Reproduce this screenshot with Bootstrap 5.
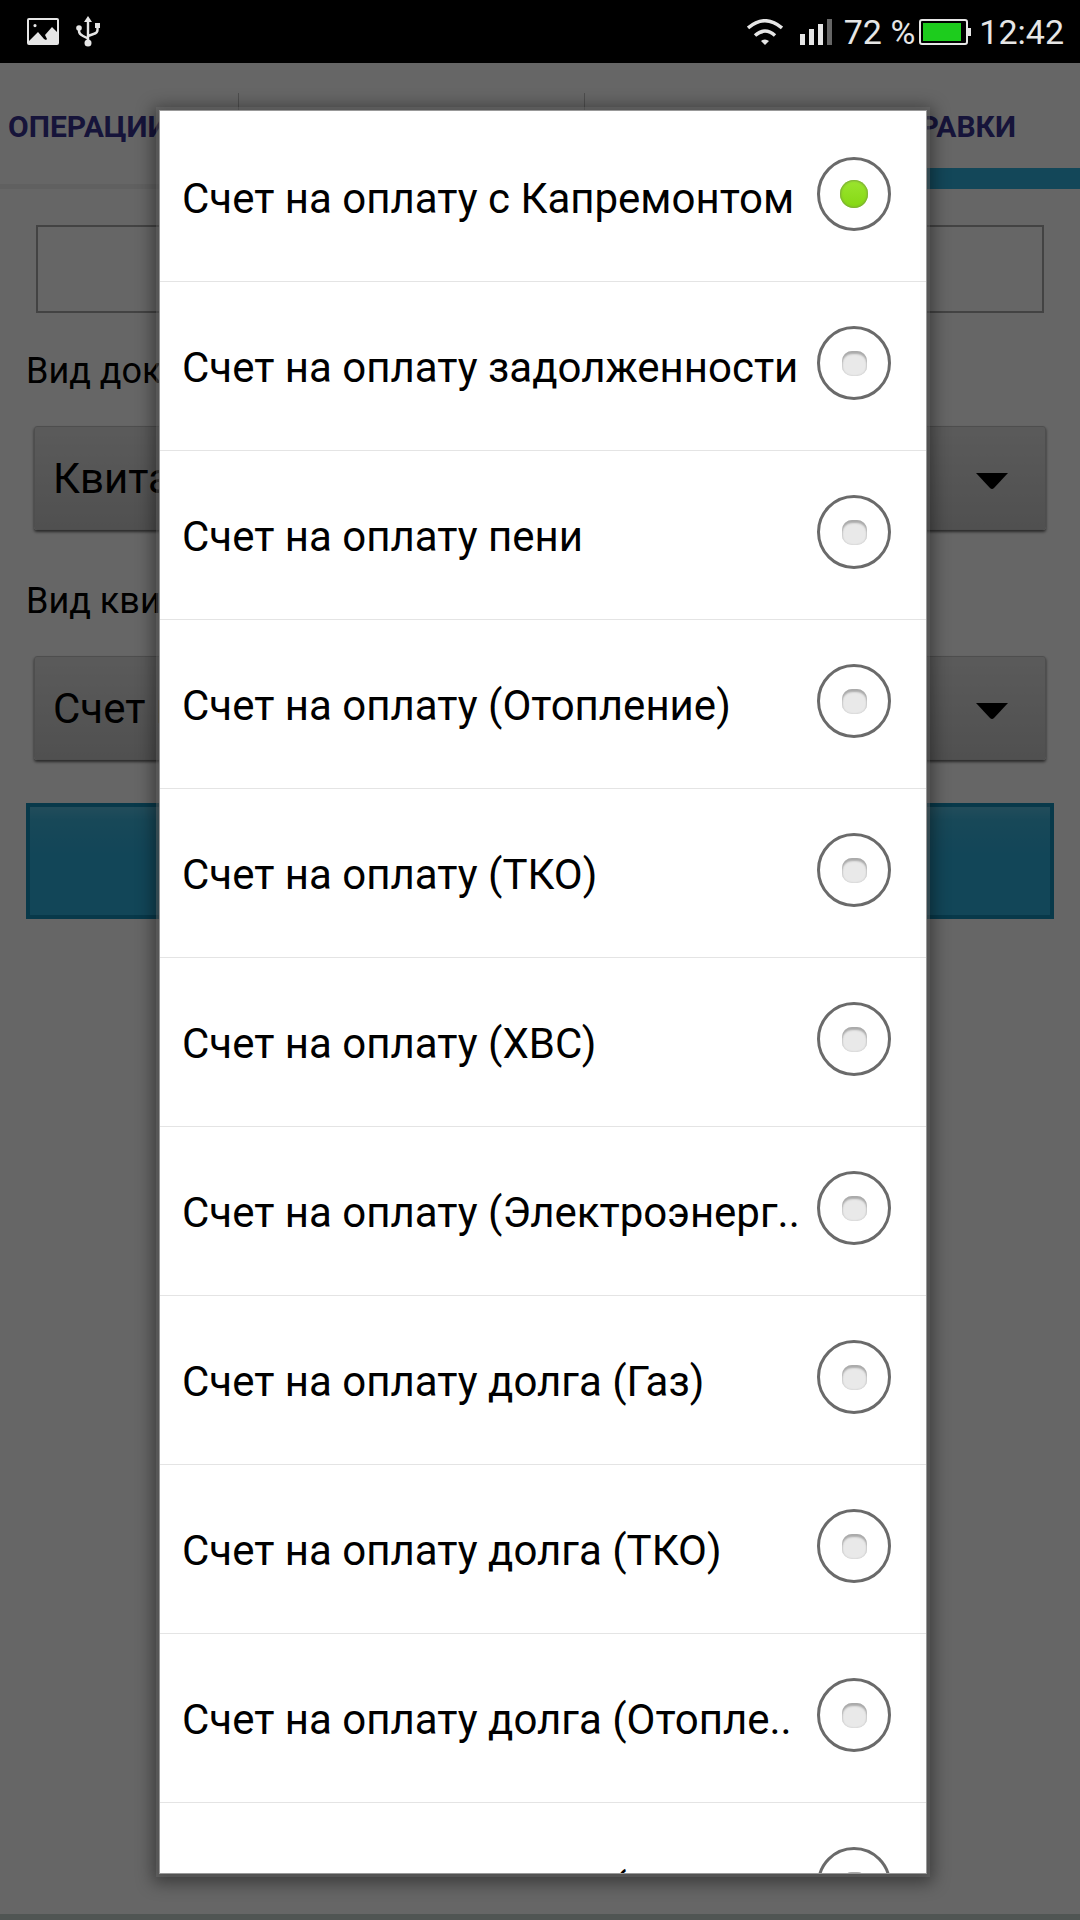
<!DOCTYPE html>
<html lang="ru">
<head>
<meta charset="utf-8">
<meta name="viewport" content="width=device-width, initial-scale=1">
<title>Вид квитанции</title>
<link href="https://cdn.jsdelivr.net/npm/bootstrap@5.3.0/dist/css/bootstrap.min.css" rel="stylesheet">
<style>
  body { font-family: Roboto, "Noto Sans", sans-serif; color: #000; background: #fff; }
  .status-bar { height: 63px; padding: 0 16px 0 27px; background: #000; color: #e6e6e6; font-size: 34px; line-height: 40px; }
  .status-bar svg { display: block; flex: none; }
  .screen { border-bottom: 6px solid #505553; }

  .tab-strip { height: 126px; }
  .tab-item { border: 0; border-bottom: 5px solid #f0f0f0; background: none; color: #373291; font-size: 30px; font-weight: 700; line-height: 36px; white-space: nowrap; padding: 41px 8px 35px; }
  .tab-first { width: 22%; text-align: left; }
  .tab-middle { width: 32%; }
  .tab-current { border-bottom: 21px solid #30b2df; padding-bottom: 19px; padding-right: 64px; text-align: right; }
  .tab-rule { width: 1px; margin: 30px 0; background: #c4c4c4; }

  .form-area { padding: 36px 26px; }
  .account-box { width: auto; height: 88px; margin: 0 10px 37px; border: 2px solid #a8a8a8; border-radius: 0; background: #fff; font-size: 36px; }
  .field-name { font-size: 36px; line-height: 42px; margin-bottom: 34px; }
  .picker select { display: block; height: 104px; padding: 0 90px 0 18px; appearance: none; border: 1px solid #c4c4c4; border-radius: 3px; color: #000; font-size: 42px; background: linear-gradient(#e2e2e2, #c8c8c8); box-shadow: 0 2px 3px rgba(0,0,0,.6); }
  .picker svg { top: 46px; right: 46px; pointer-events: none; }
  .picker-gap { margin-bottom: 50px; }
  .send-button { height: 116px; margin-top: 43px; border: 4px solid #1690b8; border-radius: 0; background: linear-gradient(#56bfe2, #3cb4dd 12%, #2eaedb 45%, #2eaedb); }

  .dim-layer { background: rgba(0,0,0,.6); padding: 47px 153px 40px 159px; }
  .choice-dialog { background: #fff; border: 1px solid #999; padding-top: 2px; box-shadow: 0 0 0 3px rgba(110,110,110,.4), 0 3px 16px 6px rgba(0,0,0,.42); }
  .choice-row { height: 169px; flex: none; padding: 0 35px 6px 22px; border-bottom: 1px solid #e4e4e4; cursor: pointer; }
  .choice-name { font-size: 42px; line-height: 50px; padding-top: 10px; }
  .choice-dot { appearance: none; width: 74px; height: 74px; margin: 0; flex: none; border: 3px solid #6a6a6a; border-radius: 50%; display: flex; align-items: center; justify-content: center; background: #fff; }
  .choice-dot::before { content: ""; width: 25px; height: 25px; border-radius: 10px; background: #e9e9e9; box-shadow: inset 0 3px 2px #aaa, inset 0 0 2px #bbb; }
  .choice-dot:checked::before { width: 28px; height: 28px; border-radius: 50%; background: linear-gradient(#9be52f, #85d813); box-shadow: inset 0 0 2px 1px #7aa838; }
</style>
<script src="https://cdn.jsdelivr.net/npm/bootstrap@5.3.0/dist/js/bootstrap.bundle.min.js"></script>
</head>
<body class="d-flex flex-column vh-100 overflow-hidden">

<header class="status-bar d-flex align-items-center justify-content-between flex-shrink-0">
  <div class="d-flex align-items-center gap-3">
    <svg width="32" height="27" viewBox="0 0 32 27" role="img" aria-label="Снимок экрана"><path fill="#e6e6e6" fill-rule="evenodd" d="M2 0h28a2 2 0 0 1 2 2v23a2 2 0 0 1-2 2H2a2 2 0 0 1-2-2V2a2 2 0 0 1 2-2zM2 2v21l9-9 6 7 2 1 1-1-2-4 7-8 5 5V2zM8 6a1.600 1.600 0 1 1 0 3.200A1.600 1.600 0 0 1 8 6z"/></svg>
    <svg width="26" height="32" viewBox="0 0 24 32" role="img" aria-label="USB"><g fill="#e6e6e6"><path d="M12 0l4 6H8z"/><circle cx="12" cy="27" r="3.500"/><circle cx="3" cy="12" r="2.800"/><path d="M19 7h5v5h-5z"/></g><path fill="none" stroke="#e6e6e6" stroke-width="2.400" d="M12 4v22M3 12v3q0 3 4 5l5 2.500M21.500 11v3q0 3-4 4L12 20"/></svg>
  </div>
  <div class="d-flex align-items-center">
    <svg class="me-3" width="36" height="26" viewBox="0 0 36 26" role="img" aria-label="Wi-Fi"><g fill="none" stroke="#e6e6e6" stroke-width="3.500"><path d="M1 9Q18-5.500 35 9"/><path d="M8 16.500Q18 7.500 28 16.500"/></g><path fill="#e6e6e6" d="M14 22q4-3 8 0l-4 4z"/></svg>
    <svg class="me-2" width="33" height="26" viewBox="0 0 33 26" role="img" aria-label="Сигнал сети"><path fill="#e6e6e6" d="M1 15h5v11H1zM10 10h5v16h-5zM19 5h5v21h-5z"/><path fill="#666" d="M28 0h5v26h-5z"/></svg>
    <span class="ms-1 me-1">72 %</span>
    <svg class="me-2" width="52" height="26" viewBox="0 0 52 26" role="img" aria-label="Заряд батареи"><rect x="1" y="1" width="47" height="24" rx="2" fill="none" stroke="#e6e6e6" stroke-width="2"/><path fill="#1dcc1d" d="M4 4h38v18H4z"/><path fill="#e6e6e6" d="M49 9h3v8h-3z"/></svg>
    <time>12:42</time>
  </div>
</header>

<main class="screen position-relative flex-grow-1 overflow-hidden">
  <nav class="tab-strip d-flex" aria-label="Разделы">
    <button type="button" class="tab-item tab-first">ОПЕРАЦИИ</button>
    <div class="tab-rule"></div>
    <button type="button" class="tab-item tab-middle" aria-label="Платежи"></button>
    <div class="tab-rule"></div>
    <button type="button" class="tab-item tab-current flex-grow-1">СПРАВКИ</button>
  </nav>

  <form class="form-area d-flex flex-column">
    <input type="text" class="account-box form-control" aria-label="Лицевой счет">
    <label class="field-name" for="docKind">Вид документа</label>
    <div class="picker picker-gap position-relative px-2">
      <select id="docKind" class="w-100"><option>Квитанция</option></select>
      <svg class="position-absolute" width="32" height="18" viewBox="0 0 32 18" aria-hidden="true"><path d="M0 1h32L18 16q-2 2-4 0z"/></svg>
    </div>
    <label class="field-name" for="billKind">Вид квитанции</label>
    <div class="picker position-relative px-2">
      <select id="billKind" class="w-100"><option>Счет на оплату с Капремонтом</option></select>
      <svg class="position-absolute" width="32" height="18" viewBox="0 0 32 18" aria-hidden="true"><path d="M0 1h32L18 16q-2 2-4 0z"/></svg>
    </div>
    <button type="button" class="send-button btn" aria-label="Получить"></button>
  </form>

  <div class="dim-layer position-absolute top-0 start-0 w-100 h-100">
    <div class="choice-dialog h-100 overflow-hidden d-flex flex-column" role="dialog" aria-label="Вид квитанции">
      <label class="choice-row d-flex align-items-center justify-content-between"><span class="choice-name text-nowrap">Счет на оплату с Капремонтом</span><input class="choice-dot" type="radio" name="bill" checked></label>
      <label class="choice-row d-flex align-items-center justify-content-between"><span class="choice-name text-nowrap">Счет на оплату задолженности</span><input class="choice-dot" type="radio" name="bill"></label>
      <label class="choice-row d-flex align-items-center justify-content-between"><span class="choice-name text-nowrap">Счет на оплату пени</span><input class="choice-dot" type="radio" name="bill"></label>
      <label class="choice-row d-flex align-items-center justify-content-between"><span class="choice-name text-nowrap">Счет на оплату (Отопление)</span><input class="choice-dot" type="radio" name="bill"></label>
      <label class="choice-row d-flex align-items-center justify-content-between"><span class="choice-name text-nowrap">Счет на оплату (ТКО)</span><input class="choice-dot" type="radio" name="bill"></label>
      <label class="choice-row d-flex align-items-center justify-content-between"><span class="choice-name text-nowrap">Счет на оплату (ХВС)</span><input class="choice-dot" type="radio" name="bill"></label>
      <label class="choice-row d-flex align-items-center justify-content-between"><span class="choice-name text-nowrap">Счет на оплату (Электроэнерг..</span><input class="choice-dot" type="radio" name="bill"></label>
      <label class="choice-row d-flex align-items-center justify-content-between"><span class="choice-name text-nowrap">Счет на оплату долга (Газ)</span><input class="choice-dot" type="radio" name="bill"></label>
      <label class="choice-row d-flex align-items-center justify-content-between"><span class="choice-name text-nowrap">Счет на оплату долга (ТКО)</span><input class="choice-dot" type="radio" name="bill"></label>
      <label class="choice-row d-flex align-items-center justify-content-between"><span class="choice-name text-nowrap">Счет на оплату долга (Отопле..</span><input class="choice-dot" type="radio" name="bill"></label>
      <label class="choice-row d-flex align-items-center justify-content-between"><span class="choice-name text-nowrap">Счет на оплату долга (Электр..</span><input class="choice-dot" type="radio" name="bill"></label>
    </div>
  </div>
</main>
</body>
</html>
